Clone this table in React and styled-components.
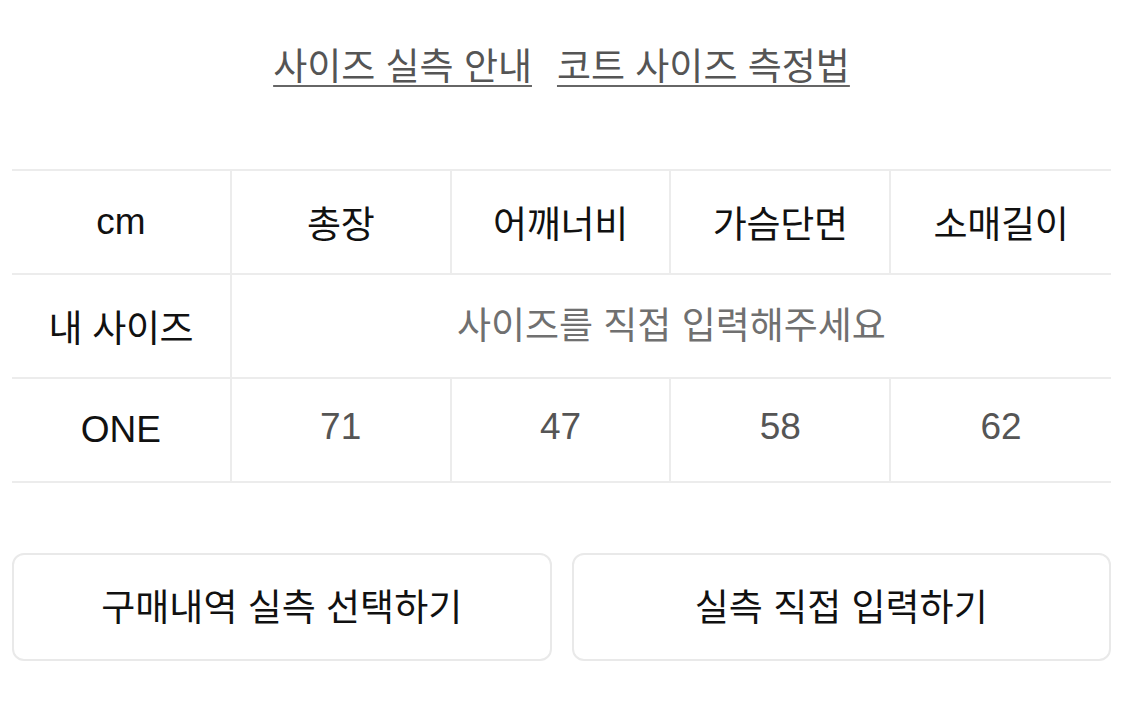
import React from "react";
import styled, { createGlobalStyle } from "styled-components";

const GlobalStyle = createGlobalStyle`
  body {
    margin: 0;
    background: #ffffff;
    font-family: "Liberation Sans", "Noto Sans CJK KR", sans-serif;
  }
`;

const Page = styled.div`
  width: 1125px;
  height: 712px;
  padding: 0 14px 0 12px;
  box-sizing: border-box;
  overflow: hidden;
`;

const GuideLinks = styled.nav`
  display: flex;
  justify-content: center;
  gap: 25px;
  padding-top: 42px;
  height: 169px;
  box-sizing: border-box;
`;

const GuideLink = styled.a`
  font-size: 37px;
  line-height: 52px;
  height: 52px;
  color: #555555;
  text-decoration: underline;
  text-decoration-color: #666666;
  text-decoration-thickness: 2px;
  text-underline-offset: 5px;
`;

const SizeTable = styled.div`
  display: grid;
  grid-template-columns: repeat(5, 1fr);
  grid-auto-rows: 104px;
  border-top: 2px solid #ececec;
`;

const Cell = styled.div`
  display: flex;
  align-items: center;
  justify-content: center;
  border-bottom: 2px solid #ececec;
  border-right: ${(p) => (p.$last ? "none" : "2px solid #ececec")};
  grid-column: ${(p) => (p.$span ? `span ${p.$span}` : "auto")};
  color: ${(p) => p.$tone || "#111111"};
  font-size: 37px;
  letter-spacing: ${(p) => (p.$latin || p.$tone ? "0" : "-0.3px")};
  padding-bottom: ${(p) => (p.$lift ? "6px" : "0")};
`;

const Actions = styled.div`
  display: grid;
  grid-template-columns: 1fr 1fr;
  gap: 20px;
  margin-top: 70px;
`;

const ActionButton = styled.button`
  height: 108px;
  background: #ffffff;
  border: 2px solid #e9e9e9;
  border-radius: 12px;
  font-family: "Liberation Sans", "Noto Sans CJK KR", sans-serif;
  font-size: 37px;
  color: #111111;
  padding: 0 0 4px;
`;

const headers = ["총장", "어깨너비", "가슴단면", "소매길이"];
const values = [71, 47, 58, 62];

export default function App() {
  return (
    <>
      <GlobalStyle />
      <Page>
        <GuideLinks>
          <GuideLink>사이즈 실측 안내</GuideLink>
          <GuideLink>코트 사이즈 측정법</GuideLink>
        </GuideLinks>

        <SizeTable>
          <Cell $latin>cm</Cell>
          {headers.map((h, i) => (
            <Cell key={h} $last={i === headers.length - 1}>
              {h}
            </Cell>
          ))}

          <Cell>내 사이즈</Cell>
          <Cell $span={4} $last $tone="#707070" $lift>
            사이즈를 직접 입력해주세요
          </Cell>

          <Cell $latin>ONE</Cell>
          {values.map((v, i) => (
            <Cell key={v} $latin $tone="#555555" $last={i === values.length - 1} $lift>
              {v}
            </Cell>
          ))}
        </SizeTable>

        <Actions>
          <ActionButton>구매내역 실측 선택하기</ActionButton>
          <ActionButton>실측 직접 입력하기</ActionButton>
        </Actions>
      </Page>
    </>
  );
}
